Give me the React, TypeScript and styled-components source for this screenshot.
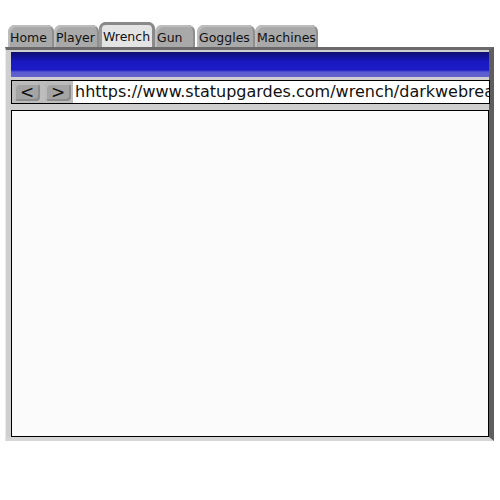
import React from "react";
import styled, { createGlobalStyle } from "styled-components";

const Global = createGlobalStyle`
  html, body { margin: 0; padding: 0; background: #ffffff; }
  body { font-family: "DejaVu Sans", "Noto Sans", sans-serif; }
`;

const Page = styled.div`
  width: 500px;
  height: 500px;
  padding: 23px 0 0 5px;
  box-sizing: border-box;
`;

const TabRow = styled.div`
  display: flex;
  align-items: flex-end;
  padding-left: 3px;
  height: 24px;
  position: relative;
  z-index: 1;
`;

const Tab = styled.div<{ $active?: boolean; $w: number; $gap?: number }>`
  width: ${(p) => p.$w}px;
  margin-left: ${(p) => p.$gap ?? 0}px;
  height: ${(p) => (p.$active ? 25 : 22)}px;
  box-sizing: border-box;
  background: ${(p) => (p.$active ? "#e4e4e4" : "#a9a9a9")};
  border-radius: 7px 7px 0 0;
  box-shadow: ${(p) =>
    p.$active
      ? "inset 0 3px 0 #8a8a8a, inset 3px 0 0 #9a9a9a, inset -3px 0 0 #8a8a8a"
      : "inset 2px 2px 0 #bdbdbd, inset -2px 0 0 #8e8e8e"};
  font-size: 12.5px;
  color: #111;
  display: flex;
  align-items: center;
  padding: ${(p) => (p.$active ? "3px 0 0 4px" : "3px 0 0 2px")};
  white-space: nowrap;
  overflow: hidden;
`;

const Frame = styled.div`
  width: 489px;
  height: 394px;
  box-sizing: border-box;
  background: #cfcfcf;
  border-top: 3px solid #6a6a6a;
  border-right: 5px solid #5e5e5e;
  border-left: 1px solid #ebebeb;
  border-bottom: 4px solid #d6d6d6;
  padding: 2px 0 0 5px;
  display: flex;
  flex-direction: column;
`;

const TitleBar = styled.div`
  height: 25px;
  width: 478px;
  background: linear-gradient(
    to bottom,
    #0f0f6e 0px,
    #12129a 5px,
    #1a1ac4 10px,
    #1c1cc4 18px,
    #5a5ad2 20px,
    #6464cc 25px
  );
`;

const AddressRow = styled.div`
  margin-top: 3px;
  height: 24px;
  width: 479px;
  box-sizing: border-box;
  border: 1px solid #000;
  background: #bdbdbd;
  display: flex;
  align-items: center;
  padding-left: 2px;
  gap: 5px;
`;

const NavButton = styled.div`
  width: 26px;
  height: 18px;
  box-sizing: border-box;
  border-radius: 4px;
  background: #a4a4a4;
  box-shadow: inset 2px 2px 0 #bababa, inset -2px -2px 0 #8c8c8c;
  font-size: 17px;
  line-height: 18px;
  text-align: center;
  color: #111;
`;

const UrlField = styled.div`
  flex: 1;
  height: 22px;
  background: #fff;
  font-size: 16px;
  line-height: 22px;
  color: #111;
  white-space: nowrap;
  overflow: hidden;
  margin-left: -3px;
  padding-left: 2px;
`;

const Content = styled.div`
  margin-top: 6px;
  width: 478px;
  height: 327px;
  box-sizing: border-box;
  border: 1px solid #000;
  background: #fbfbfb;
`;

export default function App() {
  return (
    <Page>
      <Global />
      <TabRow>
        <Tab $w={46}>Home</Tab>
        <Tab $w={45}>Player</Tab>
        <Tab $w={56} $active>Wrench</Tab>
        <Tab $w={40}>Gun</Tab>
        <Tab $w={58} $gap={2}>Goggles</Tab>
        <Tab $w={63}>Machines</Tab>
      </TabRow>
      <Frame>
        <TitleBar />
        <AddressRow>
          <NavButton>&lt;</NavButton>
          <NavButton>&gt;</NavButton>
          <UrlField>hhttps://www.statupgardes.com/wrench/darkwebreader</UrlField>
        </AddressRow>
        <Content />
      </Frame>
    </Page>
  );
}
